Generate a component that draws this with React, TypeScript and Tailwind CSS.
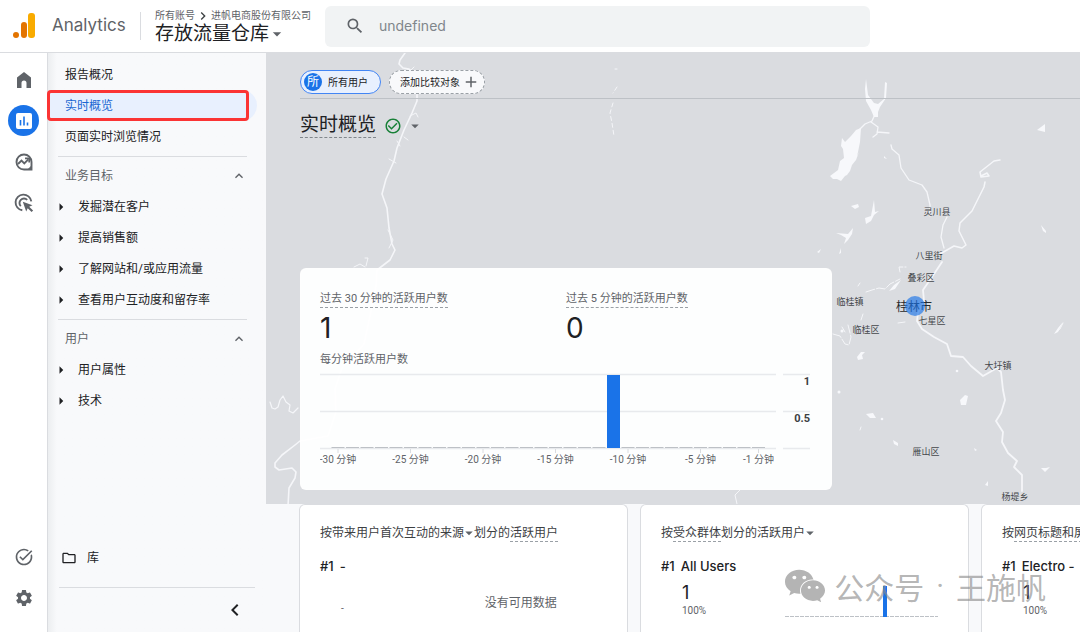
import type { ReactNode } from "react";
import { FaWeixin } from "react-icons/fa";
import {
  MdAdd,
  MdArrowDropDown,
  MdArrowRight,
  MdCheckCircleOutline,
  MdChevronLeft,
  MdChevronRight,
  MdExpandLess,
  MdOutlineFolder,
  MdSearch,
  MdSettings,
  MdTaskAlt
} from "react-icons/md";

const navGroups = [
  { title: "业务目标", items: ["发掘潜在客户", "提高销售额", "了解网站和/或应用流量", "查看用户互动度和留存率"] },
  { title: "用户", items: ["用户属性", "技术"] }
];

const places = [
  { name: "灵川县", x: 937, y: 215 },
  { name: "八里街", x: 929, y: 259 },
  { name: "叠彩区", x: 921, y: 281 },
  { name: "临桂镇", x: 850, y: 305 },
  { name: "七星区", x: 932, y: 324 },
  { name: "临桂区", x: 866, y: 333 },
  { name: "大圩镇", x: 998, y: 369 },
  { name: "雁山区", x: 926, y: 455 },
  { name: "杨堤乡", x: 1015, y: 500 }
];

// active users per minute, from -30 to -1
const minutes = Array.from({ length: 30 }, (_, i) => ({ minute: i - 30, users: i === 19 ? 1 : 0 }));
const tickMinutes = [-30, -25, -20, -15, -10, -5, -1];

function AnalyticsLogo() {
  return (
    <svg width="24" height="28" viewBox="0 0 24 28" aria-hidden="true">
      <rect x="16" y="1" width="7" height="25" rx="3" fill="#f9ab00" />
      <rect x="9" y="10" width="6" height="16" rx="3" fill="#e37400" />
      <circle cx="4" cy="23" r="3" fill="#e37400" />
    </svg>
  );
}

function HomeIcon() {
  return (
    <svg width="16" height="16" viewBox="0 0 16 16" fill="#5f6368" aria-hidden="true">
      <path d="M8 0L1 5.500V16h4.500v-5a2.500 2.500 0 0 1 5 0v5H15V5.500z" />
    </svg>
  );
}

function ReportsIcon() {
  return (
    <svg width="18" height="18" viewBox="0 0 18 18" aria-hidden="true">
      <rect x="1" y="1" width="16" height="16" rx="2" fill="#fff" />
      <path d="M5.500 8v5.500M9 4.500v9M12.500 10.500v3" stroke="#1a73e8" strokeWidth="1.600" />
    </svg>
  );
}

function ExploreIcon() {
  return (
    <svg width="20" height="20" viewBox="0 0 20 20" fill="none" stroke="#5f6368" aria-hidden="true">
      <path d="M17.500 10a7.500 7.500 0 1 0-7.500 7.500h7.500z" strokeWidth="1.900" />
      <path d="M14 17.500h3.500V14z" fill="#5f6368" />
      <path d="M4 12l3.500-3.500 2.800 2.800 4-4" strokeWidth="1.900" />
      <path d="M11 6.300h4.200v4.200" strokeWidth="1.700" />
    </svg>
  );
}

function AdvertisingIcon() {
  return (
    <svg width="20" height="20" viewBox="0 0 20 20" fill="none" stroke="#5f6368" aria-hidden="true">
      <path d="M8.300 17.300A7.900 7.900 0 1 1 17.300 8.300" strokeWidth="1.900" />
      <path d="M6.800 13.200a4.400 4.400 0 1 1 6.400-6.400" strokeWidth="1.900" />
      <path d="M8.800 8.800l9.700 3.400-3.300 1.500 3.900 3.900-1.500 1.500-3.900-3.900-1.500 3.300z" fill="#5f6368" stroke="none" />
    </svg>
  );
}

function RailButton({ label, active, children }: { label: string; active?: boolean; children: ReactNode }) {
  return (
    <button type="button" aria-label={label} className="flex h-[41px] w-full items-center justify-center text-[#5f6368]">
      {active ? (
        <span className="flex size-[31px] items-center justify-center rounded-full bg-[#1a73e8]">{children}</span>
      ) : (
        children
      )}
    </button>
  );
}

function CityMap() {
  return (
    <svg
      viewBox="266 53 814 451"
      preserveAspectRatio="xMinYMin slice"
      className="absolute inset-0 h-full w-full"
      aria-hidden="true"
    >
      <g fill="none" stroke="#f5f6f9" strokeLinecap="round" strokeLinejoin="round">
        {/* west river */}
        <path
          strokeWidth="1.600"
          d="M405 53l-5 7-1 4 4 4 6 1 5 6 3 10v16l-5 12-8 17-7 18-3 13-8 18-4 15 5 14 2 20 3 16 3 6-5 10-13 10-1 16-6 30-6 28-22 24-7 21 1 23-8 24-28 5-5 4-13 10-7 8 0 4 4 3 13-2 4 4-1 6-6 10-1 18-3 1-13 0"
        />
        <path strokeWidth="1" d="M388 230l5 10-4 8M404 137l4 3M397 141l3 5M389 159l7 4M407 69l4 1 3-3M410 116l6-3 2 4M354 267l6-3 5 3M365 258l3 0-2 8" />
        <path strokeWidth="1.200" d="M270 402l2 6 3 1 3-2 2-7 3-4 3 6 4 3-1 6 4 2 5-5" />
        <path strokeWidth="1" d="M617 69h-2M617 87l-4 6M613 103l-3 10 2 10 2 13" strokeDasharray="4 3" />
        {/* north tributary */}
        <path strokeWidth="1.300" d="M857 132l8-8 7-3 4-9M871 122l7 5-1 7-4 3M877 132l12 1" />
        <path strokeWidth="1.300" d="M891 145l1 4 7 6 2 13 8 12 13 5 5 7 3 13v11M947 217l-4 8-2 12 3 11" />
        <path strokeWidth="1.500" d="M1000 160l-6 1-14 11 1 5 8-1-2-3-6 3M985 182l-1 5-12 24-12 12-1 8 7 14-4 3-8-2-14 8" />
        {/* Li river */}
        <path
          strokeWidth="1.800"
          d="M942 262l-8 12-11 16 1 11-6 12-1 8 5 8 12 8 13 7 4 12 12 1 8 9 12 10 14-8 4 4 2 18 2 10-4 13-5 8 7 11-1 10 6 11 9 8-3 6 8 8v16"
        />
        <path strokeWidth="1" d="M866 292l6-2 7-2 6 1 5-5 10-5M833 334l7 2 5 8 4 1 2-8-3-12M842 327l3 5M900 272l-1-5 7 0M861 320l2-6M898 323l7-1M860 283l-2 3" strokeDasharray="9 2" />
        <path strokeWidth="1" d="M740 490l-5 5 2 9M1056 332l4-3 3-6M861 427l-1 3" />
      </g>
      <g fill="#f7f8fb">
        <path d="M866 79l1 8 1 8 6 8 4 1 6-5 1-17 2 1-1 15-6 9-2 5 0 5-4 0-3-7-5-9-1-12z" />
        <path d="M861 128l-1 14-2 10-1 4 2-4-3 8-4 5-2 6-3 4-2 1-4 5-4-2-4 0-3-3 8-6 2-9 4-3-1-9-2-3 1-8 3 4 6-6 5-6z" />
        <path d="M851 206l7-2 1 3-4 2zM865 218l6-2 3-16 1 12 4-1-5 4-3 6-5 3zM836 233l12 1 5-6-1 6-4 6-4 4 2-6-5-3zM817 252l4-3-2 4zM839 254l2-6v5z" />
        <path d="M1037 130l8-6 0 8zM1041 225l5 6 0 2-3-2zM1054 334l4-6 5-6-5 10zM884 156l3 3-3-1zM889 291l5-6 7-5-6 9z" />
        <path d="M857 357l4-5 4 0-3 3 1 4-5 1zM960 400l5-5 3 1-2 9-5 0zM866 414l7-1 3 5-6 0zM893 440l5 3 0 3-4-2zM974 448l3 2-2 1zM1041 468l5 0 4-1-5 5zM985 485l3-4 0 5z" />
        <circle cx="839" cy="392" r="1.500" />
        <circle cx="957" cy="371" r="1.300" />
        <circle cx="882" cy="419" r="1.300" />
        <circle cx="842" cy="331" r="1.500" />
      </g>
      <g className="fill-[#44474b] font-['Noto_Sans_CJK_SC',sans-serif] text-[9px]" textAnchor="middle">
        {places.map((place) => (
          <text key={place.name} x={place.x} y={place.y}>
            {place.name}
          </text>
        ))}
        <text x="914" y="311" className="fill-[#26282b] text-[12px]">
          桂林市
        </text>
      </g>
      <circle cx="915" cy="306" r="10" fill="#1a73e8" fillOpacity="0.65" />
    </svg>
  );
}

function MinuteChart() {
  return (
    <svg viewBox="0 0 492 100" className="block w-full" role="img" aria-label="每分钟活跃用户数">
      <path d="M0 6.500h456M463 6.500h27M0 43.500h456M463 43.500h27M0 80.500h456M463 80.500h27" stroke="#e8eaed" strokeWidth="1.500" />
      {minutes.map(({ minute, users }) => {
        const center = 18 + (minute + 30) * 14.5;
        return users > 0 ? (
          <rect key={minute} x={center - 6.5} y={80 - users * 73} width="13" height={users * 73} fill="#1a73e8" />
        ) : (
          <rect key={minute} x={center - 6.5} y="79" width="13" height="1" fill="#bdc1c6" />
        );
      })}
      <g className="fill-[#5f6368] font-[Roboto,'Noto_Sans_CJK_SC',sans-serif] text-[10px]" textAnchor="middle">
        {tickMinutes.map((minute) => {
          const center = 18 + (minute + 30) * 14.5;
          return (
            <g key={minute}>
              <path d={`M${center} 81v4`} stroke="#dadce0" />
              <text x={center} y="95">
                {minute} 分钟
              </text>
            </g>
          );
        })}
      </g>
      <g className="fill-[#3c4043] font-[Roboto,sans-serif] text-[11px] font-bold" textAnchor="end">
        <text x="490" y="17">1</text>
        <text x="490" y="54">0.5</text>
      </g>
    </svg>
  );
}

function Term({ children }: { children: ReactNode }) {
  return <span className="border-b border-dashed border-[#9aa0a6]">{children}</span>;
}

function ReportCard({ title, rank, children }: { title: ReactNode; rank: string; children: ReactNode }) {
  return (
    <article className="w-[329px] shrink-0 rounded-t-md border border-b-0 border-[#dadce0] bg-white px-5 pt-5">
      <h2 className="flex h-4 items-center text-xs whitespace-nowrap text-[#3c4043]">{title}</h2>
      <p className="mt-4 flex h-5 items-center gap-1.5 font-[Inter,sans-serif] text-[13px] font-medium whitespace-nowrap text-[#202124]">
        <span>#1</span>
        <span>{rank}</span>
      </p>
      {children}
    </article>
  );
}

function UserCount() {
  return (
    <div className="mt-1 ml-[21px]">
      <p className="font-[Inter,sans-serif] text-lg leading-6 text-[#202124]">1</p>
      <p className="font-[Roboto,sans-serif] text-[10px] leading-3 text-[#5f6368]">100%</p>
    </div>
  );
}

export default function App() {
  return (
    <div className="relative flex h-screen flex-col overflow-hidden bg-white font-[Roboto,'Noto_Sans_CJK_SC',sans-serif] text-[#202124]">
      <header className="flex h-[53px] shrink-0 items-center border-b border-[#dadce0]">
        <a href="#home" className="flex w-[140px] shrink-0 items-center gap-4 pl-3">
          <AnalyticsLogo />
          <span className="font-[Inter,sans-serif] text-[17px] text-[#5f6368]">Analytics</span>
        </a>
        <div className="flex h-7 w-[185px] shrink-0 flex-col justify-center border-l border-[#dadce0] pl-3.5">
          <p className="flex items-center text-[10px] leading-3 whitespace-nowrap text-[#5f6368]">
            所有账号
            <MdChevronRight className="size-4 shrink-0 text-[#3c4043]" />
            进帆电商股份有限公司
          </p>
          <button type="button" className="flex items-center text-[19px] leading-5 whitespace-nowrap">
            存放流量仓库
            <MdArrowDropDown className="-ml-0.5 size-5 text-[#5f6368]" />
          </button>
        </div>
        <label className="mr-[210px] flex h-[41px] flex-1 items-center gap-3.5 rounded-md bg-[#f1f3f4] pl-5">
          <MdSearch className="size-5 shrink-0 text-[#5f6368]" />
          <input
            type="text"
            aria-label="搜索"
            placeholder="undefined"
            className="w-full bg-transparent font-[Inter,sans-serif] text-sm outline-none placeholder:text-[#80868b]"
          />
        </label>
      </header>

      <div className="flex min-h-0 flex-1">
        <aside className="flex w-12 shrink-0 flex-col justify-between border-r border-[#dadce0] pt-1.5 pb-3.5">
          <div>
            <RailButton label="首页">
              <HomeIcon />
            </RailButton>
            <RailButton label="报告" active>
              <ReportsIcon />
            </RailButton>
            <RailButton label="探索">
              <ExploreIcon />
            </RailButton>
            <RailButton label="广告">
              <AdvertisingIcon />
            </RailButton>
          </div>
          <div>
            <RailButton label="任务">
              <MdTaskAlt className="size-5" />
            </RailButton>
            <RailButton label="管理">
              <MdSettings className="size-5" />
            </RailButton>
          </div>
        </aside>

        <nav className="flex w-[218px] shrink-0 flex-col justify-between bg-[#f8f9fb] bg-linear-to-r from-[#eceef0] to-[#f8f9fb] to-4% pt-1.5 text-xs">
          <div>
            <a href="#overview" className="flex h-[31px] items-center pl-[17px]">
              报告概况
            </a>
            <div className="relative">
              <a
                href="#realtime"
                className="mr-[9px] flex h-[31px] items-center rounded-r-full bg-[#e8f0fe] pl-[17px] text-[#1967d2]"
              >
                实时概览
              </a>
              <span className="pointer-events-none absolute inset-y-0 right-[17px] -left-px rounded-sm border-3 border-[#fb3434]" />
            </div>
            <a href="#pages" className="flex h-[31px] items-center pl-[17px]">
              页面实时浏览情况
            </a>
            {navGroups.map((group) => (
              <section key={group.title} className="mt-1 mr-[19px] ml-2.5 border-t border-[#dadce0] pt-[3px]">
                <button
                  type="button"
                  className="flex h-[31px] w-full items-center justify-between pl-[7px] text-[#5f6368]"
                >
                  {group.title}
                  <MdExpandLess className="size-4" />
                </button>
                {group.items.map((item) => (
                  <a key={item} href="#report" className="flex h-[31px] items-center whitespace-nowrap">
                    <MdArrowRight className="mr-2 -ml-1.5 size-[18px]" />
                    {item}
                  </a>
                ))}
              </section>
            ))}
          </div>
          <div className="mr-[11px] ml-[11px]">
            <a href="#library" className="flex h-[31px] items-center gap-2.5 pl-0.5">
              <MdOutlineFolder className="size-4" />
              库
            </a>
            <div className="mt-3.5 flex h-[45px] items-center justify-end border-t border-[#dadce0] pr-2">
              <button type="button" aria-label="收起导航">
                <MdChevronLeft className="size-6 stroke-black" />
              </button>
            </div>
          </div>
        </nav>

        <main className="flex min-w-0 flex-1 flex-col overflow-hidden bg-[#f8f9fb]">
          <section className="relative shrink-0 bg-[#dadce0] pb-3.5 pl-[34px]">
            <CityMap />
            <div className="relative">
              <div className="flex gap-2 border-b border-[#bdc1c6] pt-[17px] pb-1 text-[10px]">
                <button
                  type="button"
                  className="flex h-6 items-center gap-1.5 rounded-full border border-[#4285f4] bg-[#e8f0fe] pr-3 pl-[3px]"
                >
                  <span className="flex size-[18px] items-center justify-center rounded-full bg-[#1a73e8] text-xs text-white">
                    所
                  </span>
                  所有用户
                </button>
                <button
                  type="button"
                  className="flex h-6 items-center gap-0.5 rounded-full border border-dashed border-[#9aa0a6] bg-[#f8f9fb] pr-1 pl-2.5"
                >
                  添加比较对象
                  <MdAdd className="size-[18px] text-[#5f6368]" />
                </button>
              </div>
              <div className="mt-3.5 flex items-center gap-2">
                <h1 className="border-b border-dashed border-[#80868b] text-[19px] leading-6">实时概览</h1>
                <MdCheckCircleOutline className="size-[18px] text-[#188038]" />
                <MdArrowDropDown className="-ml-1 size-[18px] text-[#5f6368]" />
              </div>

              <div className="mt-[130px] w-[532px] rounded-md border border-white/40 bg-white/95 px-[19px] pt-[22px] pb-[21px] text-[11px] text-[#5f6368]">
                <div className="grid grid-cols-2">
                  <div>
                    <p className="flex leading-4">
                      <Term>过去 30 分钟的活跃用户数</Term>
                    </p>
                    <p className="mt-1 font-[Inter,sans-serif] text-[28px] leading-8 text-[#202124]">1</p>
                  </div>
                  <div>
                    <p className="flex leading-4">
                      <Term>过去 5 分钟的活跃用户数</Term>
                    </p>
                    <p className="mt-1 font-[Inter,sans-serif] text-[28px] leading-8 text-[#202124]">0</p>
                  </div>
                </div>
                <p className="mt-2 leading-4">每分钟活跃用户数</p>
                <MinuteChart />
              </div>
            </div>
          </section>

          <section className="flex min-h-0 flex-1 gap-3 pl-[33px]">
            <ReportCard
              rank="-"
              title={
                <>
                  按带来用户首次互动的来源
                  <MdArrowDropDown className="-mx-1 size-[18px] text-[#5f6368]" />
                  划分的<Term>活跃用户</Term>
                </>
              }
            >
              <div className="mt-4 flex gap-[141px] pl-[21px]">
                <span className="text-[10px] leading-8 text-[#5f6368]">-</span>
                <span className="text-xs leading-5 text-[#5f6368]">没有可用数据</span>
              </div>
            </ReportCard>
            <ReportCard
              rank="All Users"
              title={
                <>
                  按<Term>受众群体</Term>划分的活跃用户
                  <MdArrowDropDown className="-mx-1 size-[18px] text-[#5f6368]" />
                </>
              }
            >
              <div className="flex justify-between">
                <UserCount />
                <svg width="153" height="34" viewBox="0 0 153 34" className="mt-2 mr-2.5" aria-hidden="true">
                  <path d="M0 31.500h153" stroke="#bdc1c6" strokeDasharray="4 1" />
                  <rect x="98" y="1" width="4" height="31" fill="#1a73e8" />
                </svg>
              </div>
            </ReportCard>
            <ReportCard
              rank="Electro -"
              title={
                <>
                  按<Term>网页标题和屏幕名称</Term>划分的浏览次数
                </>
              }
            >
              <UserCount />
            </ReportCard>
          </section>
        </main>
      </div>

      <div className="pointer-events-none absolute right-[34px] bottom-6 flex items-center gap-2 font-['Noto_Sans_CJK_SC',sans-serif] text-[30px] leading-[44px] whitespace-nowrap text-[#8c8c8c]/65">
        <FaWeixin className="size-[42px]" />
        <p className="flex gap-3">
          <span>公众号</span>
          <span className="font-[Roboto,sans-serif]">·</span>
          <span>王施帆</span>
        </p>
      </div>
    </div>
  );
}
